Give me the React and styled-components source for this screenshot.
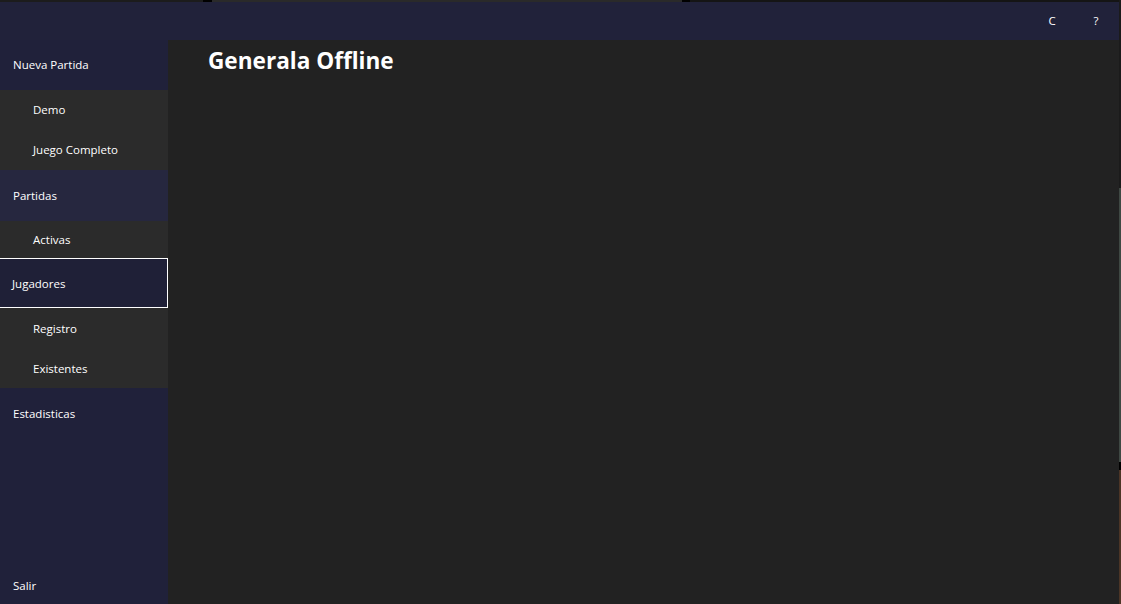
import React from "react";
import styled, { createGlobalStyle } from "styled-components";

const Global = createGlobalStyle`
  html, body { margin: 0; padding: 0; background: #1b1b1b; }
  body { font-family: "Open Sans", "Noto Sans", sans-serif; color: #fff; }
  #root { width: 1121px; height: 604px; overflow: hidden; }
`;

const Screen = styled.div`
  display: flex;
  width: 1121px;
  height: 604px;
`;

const Window = styled.div`
  display: flex;
  flex-direction: column;
  width: 1119px;
  height: 604px;
`;

const EdgeStrip = styled.div`
  width: 2px;
  height: 604px;
  background: linear-gradient(
    to bottom,
    #1b1b1b 0px, #1b1b1b 188px,
    #3f4843 188px, #3f4843 462px,
    #000 462px, #000 470px,
    #4c3526 470px, #4c3526 604px
  );
`;

const Bleed = styled.div`
  height: 2px;
  background: linear-gradient(
    to right,
    #1c1c1c 0px, #1c1c1c 203px,
    #000 203px, #000 212px,
    #2a2a2a 212px, #2a2a2a 682px,
    #000 682px, #000 690px,
    #151515 690px
  );
`;

const TopBar = styled.header`
  height: 38px;
  background: #21223a;
  display: flex;
  justify-content: flex-end;
  align-items: center;
  padding-right: 19px;
  gap: 36px;
`;

const TopButton = styled.span`
  font-size: 11.5px;
  color: #fff;
  width: 8px;
  text-align: center;
  margin-top: -1px;
`;

const Body = styled.div`
  flex: 1;
  display: flex;
  min-height: 0;
`;

const Sidebar = styled.nav`
  width: 168px;
  background: #20213a;
  display: flex;
  flex-direction: column;
  font-size: 11.5px;
`;

const Section = styled.div`
  height: ${(p) => p.$h || 50}px;
  display: flex;
  align-items: center;
  padding-left: 13px;
  padding-bottom: ${(p) => (p.$pb ?? 2)}px;
  box-sizing: border-box;
  background: ${(p) => (p.$hover ? "#26273f" : "#20213a")};
`;

const FocusedSection = styled(Section)`
  border: 1px solid #ffffff;
  margin-left: -2px;
  width: 170px;
  background: #1f2037;
`;

const SubItem = styled.div`
  height: ${(p) => p.$h || 40}px;
  display: flex;
  align-items: center;
  padding-left: 33px;
  padding-bottom: ${(p) => (p.$pb ?? 2)}px;
  box-sizing: border-box;
  background: #2b2b2b;
`;

const Spacer = styled.div`
  flex: 1;
`;

const Exit = styled.div`
  height: 38px;
  padding-left: 13px;
  display: flex;
  align-items: center;
`;

const Content = styled.main`
  flex: 1;
  background: #222222;
  padding-left: 40px;
`;

const Title = styled.h1`
  margin: 5px 0 0;
  font-size: 22.6px;
  font-weight: 700;
`;

export default function App() {
  return (
    <>
      <Global />
      <Screen>
        <Window>
          <Bleed />
          <TopBar>
            <TopButton>C</TopButton>
            <TopButton>?</TopButton>
          </TopBar>
          <Body>
            <Sidebar>
              <Section>Nueva Partida</Section>
              <SubItem>Demo</SubItem>
              <SubItem>Juego Completo</SubItem>
              <Section $hover $h={51} $pb={0}>Partidas</Section>
              <SubItem $h={37} $pb={0}>Activas</SubItem>
              <FocusedSection $pb={0}>Jugadores</FocusedSection>
              <SubItem $pb={0}>Registro</SubItem>
              <SubItem $pb={0}>Existentes</SubItem>
              <Section $pb={0}>Estadisticas</Section>
              <Spacer />
              <Exit>Salir</Exit>
            </Sidebar>
            <Content>
              <Title>Generala Offline</Title>
            </Content>
          </Body>
        </Window>
        <EdgeStrip />
      </Screen>
    </>
  );
}
